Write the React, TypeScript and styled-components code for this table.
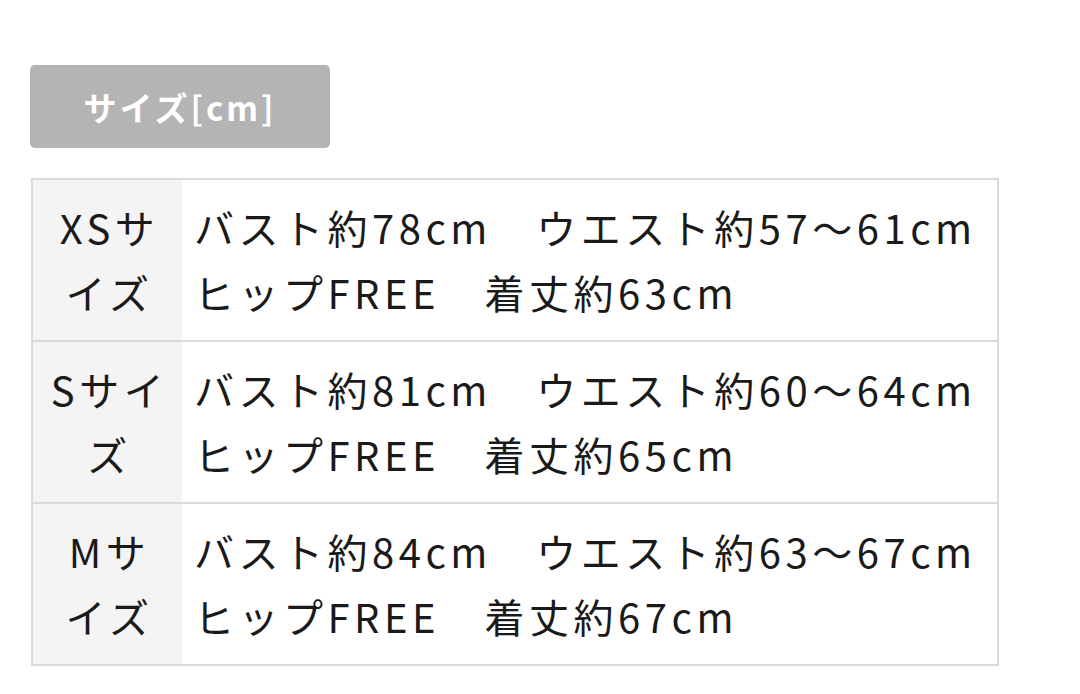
import React from 'react'
import styled, { createGlobalStyle } from 'styled-components'

const GlobalStyle = createGlobalStyle`
  html, body {
    margin: 0;
    padding: 0;
    background: #fff;
  }
  body {
    font-family: "Noto Sans CJK JP", "Noto Sans", sans-serif;
    color: #1a1a1a;
  }
`

const Page = styled.div`
  padding: 65px 0 0 30px;
`

const Badge = styled.div`
  width: 300px;
  height: 83px;
  background: #b4b4b4;
  border-radius: 5px;
  display: flex;
  align-items: center;
  justify-content: center;
  color: #fff;
  font-size: 33px;
  font-weight: 700;
  letter-spacing: 3px;
`

const Table = styled.table`
  margin-top: 30px;
  margin-left: 1px;
  width: 968px;
  border-collapse: collapse;
  border: 2px solid #dadada;
`

const Row = styled.tr`
  border-bottom: 2px solid #dadada;
  &:last-child {
    border-bottom: none;
  }
`

const Head = styled.th`
  width: 150px;
  box-sizing: border-box;
  background: #f4f4f4;
  font-weight: 400;
  font-size: 40px;
  line-height: 65px;
  letter-spacing: 4.5px;
  padding: 15px 12px 15px 16px;
  text-align: center;
  vertical-align: middle;
`

const Cell = styled.td`
  font-size: 40px;
  line-height: 65px;
  letter-spacing: 4.5px;
  padding: 15px 0 15px 12px;
  text-align: left;
  vertical-align: middle;
  white-space: nowrap;
`

const sizes = [
  { name: 'XSサイズ', bust: '78', waist: '57〜61', length: '63' },
  { name: 'Sサイズ', bust: '81', waist: '60〜64', length: '65' },
  { name: 'Mサイズ', bust: '84', waist: '63〜67', length: '67' },
]

export default function App() {
  return (
    <Page>
      <GlobalStyle />
      <Badge>サイズ[cm]</Badge>
      <Table>
        <tbody>
          {sizes.map((s) => (
            <Row key={s.name}>
              <Head>{s.name}</Head>
              <Cell>
                バスト約{s.bust}cm　ウエスト約{s.waist}cm
                <br />
                ヒップFREE　着丈約{s.length}cm
              </Cell>
            </Row>
          ))}
        </tbody>
      </Table>
    </Page>
  )
}
